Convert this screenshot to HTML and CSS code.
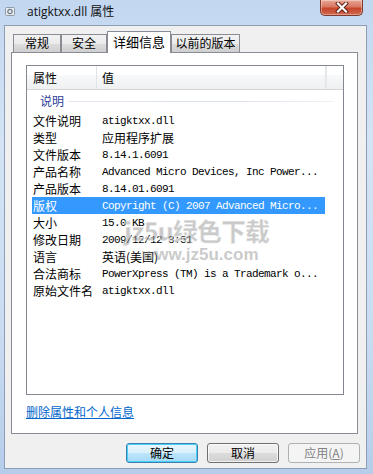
FILE: index.html
```html
<!DOCTYPE html>
<html lang="zh-CN">
<head>
<meta charset="utf-8">
<title>atigktxx.dll 属性</title>
<link rel="stylesheet" href="styles.css">
</head>
<body>
<div class="window">
  <div class="titlebar">
    <svg class="ticon" width="10" height="9" viewBox="0 0 10 9">
      <rect x="0.5" y="0.5" width="9" height="8" rx="1" fill="#e8ecf0" stroke="#8f9aa6"/>
      <circle cx="5" cy="4.5" r="2.2" fill="none" stroke="#6d7a88" stroke-width="1.2"/>
    </svg>
    <span class="title">atigktxx.dll 属性</span>
    <div class="close">
      <svg width="14" height="11" viewBox="0 0 14 11">
        <path d="M3 1.5 L11 9.5 M11 1.5 L3 9.5" stroke="#5a1b10" stroke-width="4" stroke-linecap="square"/>
        <path d="M3 1.5 L11 9.5 M11 1.5 L3 9.5" stroke="#ffffff" stroke-width="2.2" stroke-linecap="square"/>
      </svg>
    </div>
  </div>
  <div class="client">
    <div class="tabs">
      <div class="tab t1">常规</div>
      <div class="tab t2">安全</div>
      <div class="tab t3 active">详细信息</div>
      <div class="tab t4">以前的版本</div>
    </div>
    <div class="panel">
      <div class="listview">
        <div class="header">
          <div class="hc c1">属性</div>
          <div class="hc c2">值</div>
          <div class="hc c3"></div>
        </div>
        <div class="group"><span>说明</span><i class="gline"></i></div>
        <div class="row"><span class="k">文件说明</span><span class="v mono">atigktxx.dll</span></div>
        <div class="row"><span class="k">类型</span><span class="v">应用程序扩展</span></div>
        <div class="row"><span class="k">文件版本</span><span class="v mono">8.14.1.6091</span></div>
        <div class="row"><span class="k">产品名称</span><span class="v mono">Advanced Micro Devices, Inc Power...</span></div>
        <div class="row"><span class="k">产品版本</span><span class="v mono">8.14.01.6091</span></div>
        <div class="row sel"><span class="k">版权</span><span class="v mono">Copyright (C) 2007 Advanced Micro...</span></div>
        <div class="row"><span class="k">大小</span><span class="v mono">15.0 KB</span></div>
        <div class="row"><span class="k">修改日期</span><span class="v mono">2009/12/12 3:51</span></div>
        <div class="row"><span class="k">语言</span><span class="v">英语(美国)</span></div>
        <div class="row"><span class="k">合法商标</span><span class="v mono">PowerXpress (TM) is a Trademark o...</span></div>
        <div class="row"><span class="k">原始文件名</span><span class="v mono">atigktxx.dll</span></div>
      </div>
      <a class="link" href="#">删除属性和个人信息</a>
    </div>
    <div class="buttons">
      <div class="btn default">确定</div>
      <div class="btn">取消</div>
      <div class="btn disabled">应用(<u>A</u>)</div>
    </div>
  </div>
  <div class="watermark">
    <div class="wm1">jz5u绿色下载</div>
    <div class="wm2">www.jz5u.com</div>
  </div>
</div>
</body>
</html>
```

FILE: styles.css
```css
* { box-sizing: border-box; }
html, body { margin: 0; padding: 0; }
body {
  width: 373px;
  height: 474px;
  overflow: hidden;
  font-family: "Noto Sans CJK SC", "Liberation Sans", sans-serif;
  font-size: 12px;
  color: #000;
}
.window {
  position: relative;
  width: 373px;
  height: 474px;
  background: linear-gradient(180deg, #c2d7f0 0%, #d4e4f6 30%, #c9dcf2 70%, #b6cdea 100%);
}
.titlebar {
  height: 25px;
  display: flex;
  align-items: flex-start;
}
.ticon {
  margin: 7px 0 0 5px;
}
.title {
  margin: 3px 0 0 12px;
  font-family: "Open Sans", "Noto Sans CJK SC", sans-serif;
  font-size: 12px;
  line-height: 18px;
  color: #111;
}
.close {
  margin-left: auto;
  margin-right: 10px;
  width: 43px;
  height: 16px;
  border: 1px solid #7e3a2c;
  border-top: none;
  border-radius: 0 0 5px 5px;
  background: linear-gradient(180deg, #e9a795 0%, #d87760 45%, #c5452a 55%, #d0694f 100%);
  display: flex;
  align-items: center;
  justify-content: center;
  box-shadow: inset 0 0 0 1px rgba(255,255,255,0.35);
}
.client {
  margin-left: 4px;
  width: 363px;
  height: 444px;
  border: 1px solid #8d9db3;
  background: #f0f0f0;
  padding: 6px 0 0 6px;
}
.tabs {
  display: flex;
  align-items: flex-end;
  height: 20px;
  position: relative;
  z-index: 1;
}
.tab {
  height: 18px;
  border: 1px solid #898c95;
  border-bottom: none;
  background: linear-gradient(180deg, #f2f2f2 0%, #ebebeb 50%, #dddddd 51%, #cfcfcf 100%);
  text-align: center;
  line-height: 16px;
  font-size: 12px;
}
.t1 { width: 48px; margin-left: 2px; }
.t2 { width: 46px; }
.t3 { width: 64px; }
.t4 { width: 69px; }
.tab.active {
  height: 22px;
  margin-bottom: -1px;
  background: #ffffff;
  line-height: 20px;
  font-size: 13px;
}
.panel {
  width: 347px;
  height: 382px;
  border: 1px solid #898c95;
  background: #ffffff;
  padding: 12px 12px 0 14px;
}
.listview {
  width: 318px;
  height: 330px;
  border: 1px solid #828790;
  background: #fff;
}
.header {
  display: flex;
  height: 24px;
  border-bottom: 1px solid #d5d5d5;
  background: linear-gradient(180deg, #ffffff 0%, #ffffff 40%, #f7f8fa 41%, #eef0f2 100%);
}
.hc {
  line-height: 23px;
  font-size: 12px;
  border-right: 1px solid #e3e4e6;
}
.c1 { width: 70px; padding-left: 6px; }
.c2 { width: 229px; padding-left: 5px; }
.c3 { flex: 1; border-right: none; border-left: 1px solid #e8e9eb; }
.group {
  height: 22px;
  display: flex;
  align-items: center;
  padding-left: 13px;
  padding-right: 9px;
}
.group span {
  color: #2b3c98;
  font-size: 12px;
  line-height: 14px;
}
.gline {
  flex: 1;
  height: 1px;
  margin-left: 4px;
  background: linear-gradient(90deg, #e2e8f4, #d9e0ee 60%, #eef2f8);
}
.row {
  display: flex;
  height: 17px;
  margin-left: 5px;
  width: 293px;
  align-items: center;
  white-space: nowrap;
  overflow: hidden;
}
.row .k {
  width: 70px;
  padding-left: 1px;
  font-size: 12px;
  line-height: 16px;
}
.row .v {
  font-size: 12px;
  line-height: 16px;
}
.row .v.mono {
  font-family: "Liberation Mono", "DejaVu Sans Mono", monospace;
  font-size: 11px;
  letter-spacing: -0.6px;
}
.row.sel {
  background: #3399ff;
  color: #fff;
}
.link {
  display: block;
  margin-top: 9px;
  width: max-content;
  color: #0066cc;
  text-decoration: underline;
  font-size: 12px;
  line-height: 16px;
}
.buttons {
  display: flex;
  justify-content: flex-end;
  gap: 9px;
  margin-top: 9px;
  padding-right: 6px;
}
.btn {
  width: 72px;
  height: 20px;
  border: 1px solid #707070;
  border-radius: 3px;
  background: linear-gradient(180deg, #f2f2f2 0%, #ebebeb 48%, #dddddd 50%, #cfcfcf 100%);
  text-align: center;
  line-height: 18px;
  font-size: 12px;
  box-shadow: inset 0 0 0 1px rgba(255,255,255,0.7);
}
.btn.default {
  border-color: #3c7fb1;
  background: linear-gradient(180deg, #eaf6fd 0%, #d9f0fc 48%, #bee6fd 50%, #a7d9f5 100%);
  box-shadow: inset 0 0 0 1px #48d0f8;
}
.btn.disabled {
  border-color: #adb2b5;
  background: #f4f4f4;
  color: #838383;
  box-shadow: none;
}
.btn u { text-decoration: underline; }
.watermark {
  position: absolute;
  left: 124px;
  top: 214px;
  pointer-events: none;
}
.wm1 {
  font-family: "Noto Sans CJK SC", "Liberation Sans", sans-serif;
  font-weight: 900;
  font-size: 25px;
  line-height: 32px;
  color: rgba(150, 150, 150, 0.5);
  -webkit-text-stroke: 1px rgba(255, 255, 255, 0.6);
  letter-spacing: -1px;
}
.wm2 {
  font-family: "Liberation Sans", sans-serif;
  font-weight: 700;
  font-size: 17px;
  line-height: 18px;
  color: rgba(150, 150, 150, 0.5);
  margin-left: 18px;
}
```
